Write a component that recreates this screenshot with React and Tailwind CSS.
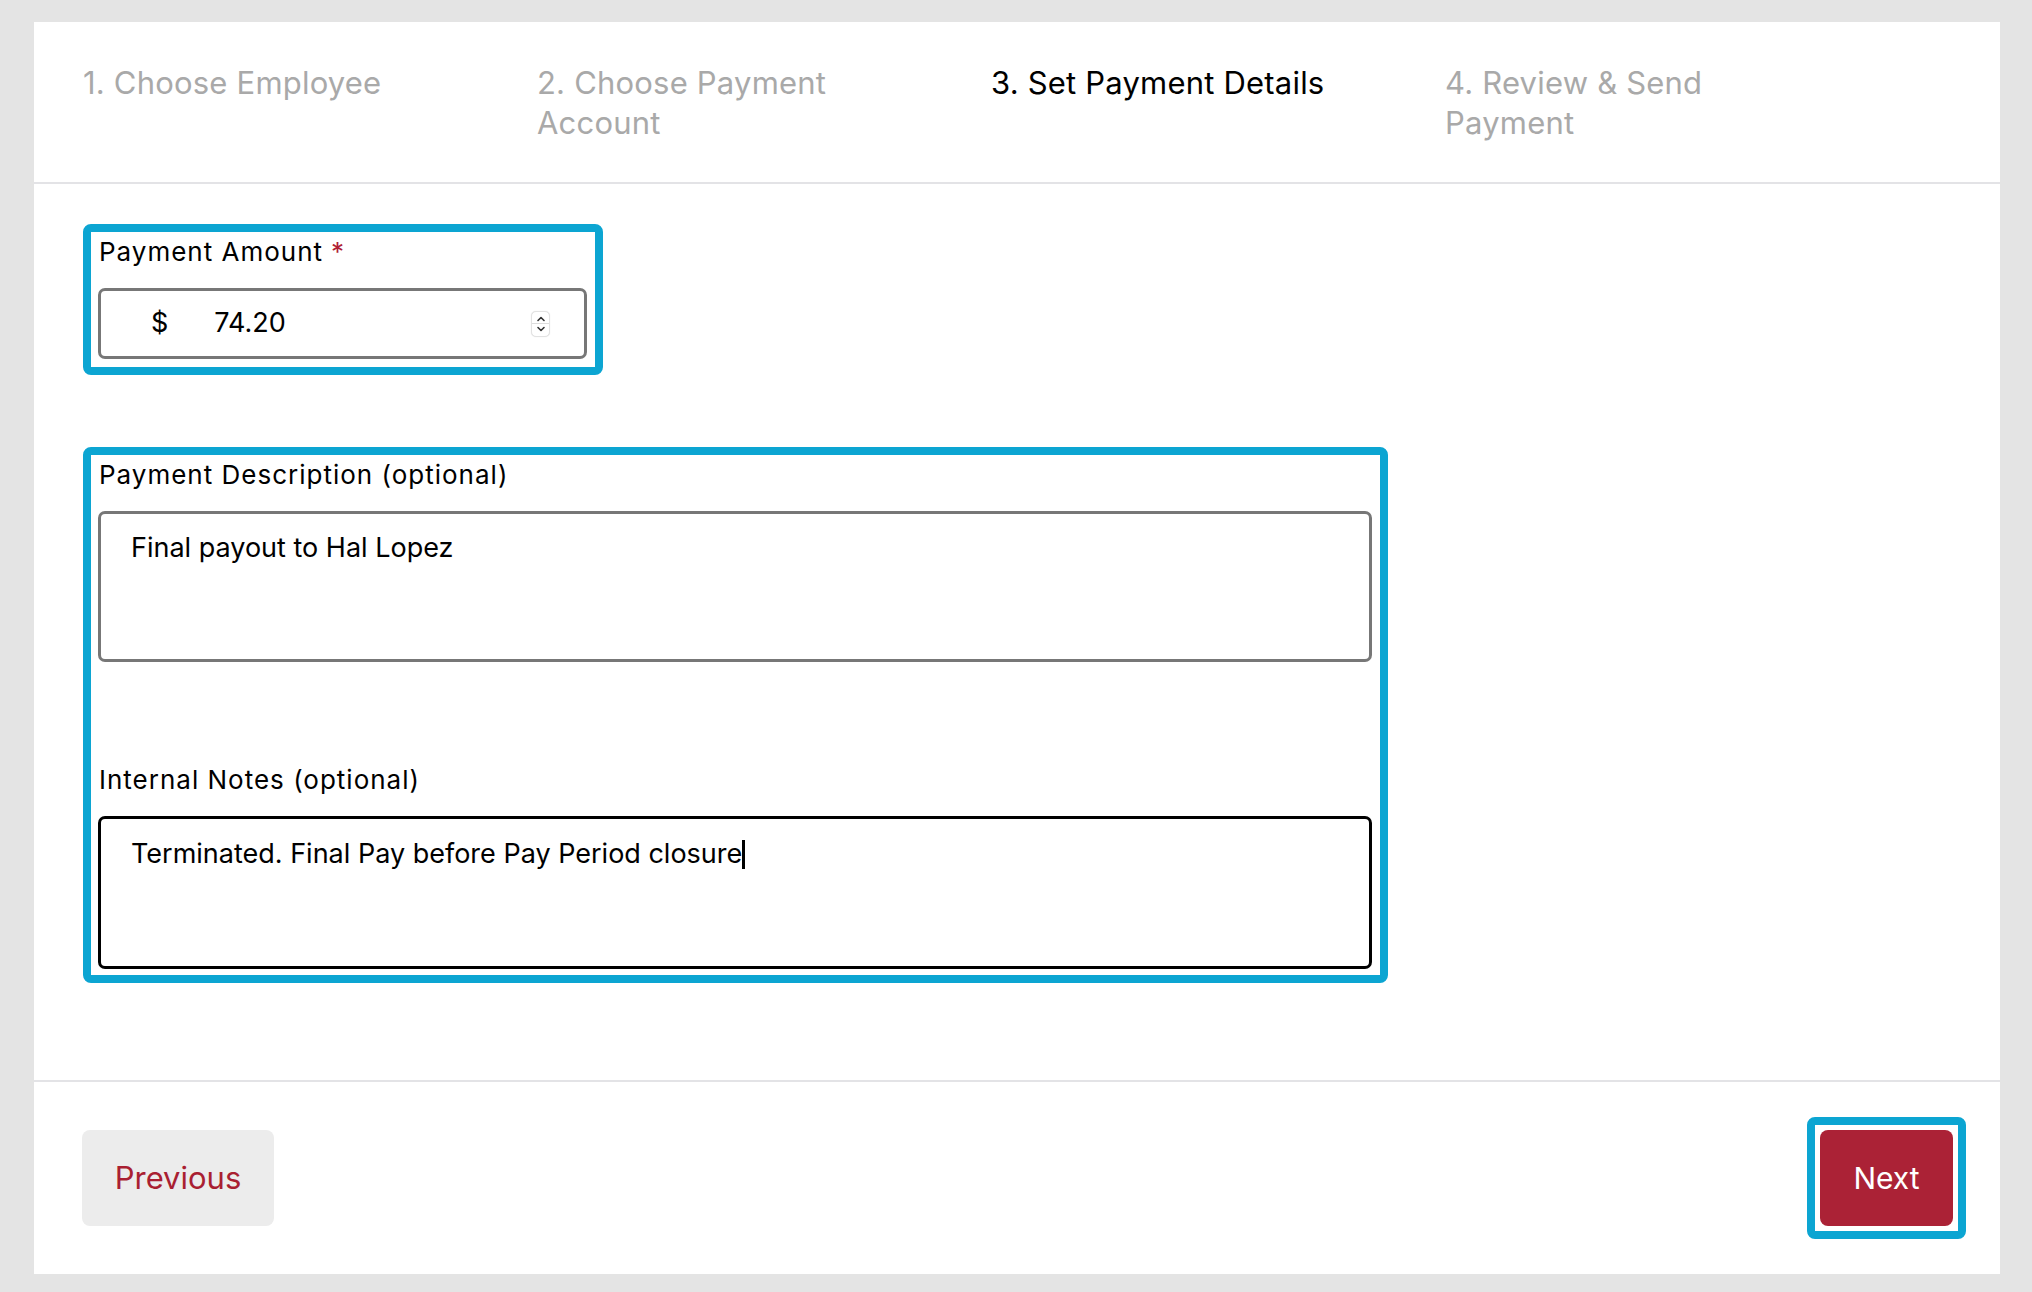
import React from "react";

const steps = [
  { label: "1. Choose Employee", active: false },
  { label: "2. Choose Payment Account", active: false },
  { label: "3. Set Payment Details", active: true },
  { label: "4. Review & Send Payment", active: false },
];

function Spinner() {
  return (
    <div className="flex flex-col items-center justify-between w-[19px] h-[26px] rounded-[5px] border border-[#e2e2e2] bg-white shadow-[0_0_1px_rgba(0,0,0,0.15)]">
      <svg width="10" height="8" viewBox="0 0 10 8" className="mt-[3px]">
        <path d="M2 5.5 L5 2.5 L8 5.5" fill="none" stroke="#333" strokeWidth="1.6" strokeLinecap="round" strokeLinejoin="round" />
      </svg>
      <div className="w-full h-px bg-[#dcdcdc]" />
      <svg width="10" height="8" viewBox="0 0 10 8" className="mb-[3px]">
        <path d="M2 2.5 L5 5.5 L8 2.5" fill="none" stroke="#333" strokeWidth="1.6" strokeLinecap="round" strokeLinejoin="round" />
      </svg>
    </div>
  );
}

function FieldLabel({ children, required }) {
  return (
    <div className="text-[26px] leading-[30px] tracking-[1px] text-black pl-[1px]">
      {children}
      {required && <span className="text-[#b01f35] ml-[8px]">*</span>}
    </div>
  );
}

export default function App() {
  return (
    <div className="min-h-screen bg-[#e4e4e4] pt-[22px] pl-[34px] font-['Inter',sans-serif]">
      <div className="w-[1966px] h-[1252px] bg-white flex flex-col">
        {/* steps */}
        <div className="h-[162px] border-b-2 border-[#e3e3e6] flex px-[49px] pt-[41px]">
          {steps.map((s) => (
            <div key={s.label} className="w-[454px] pr-[90px]">
              <div className={`text-[31px] leading-[40px] tracking-[0.2px] ${s.active ? "text-black" : "text-[#a9a9a9]"}`}>
                {s.label}
              </div>
            </div>
          ))}
        </div>

        {/* form */}
        <div className="flex-1 px-[49px] pt-[40px]">
          <div className="w-[520px] border-[8px] border-[#0ca5d2] rounded-[8px] pt-[5px] pb-[8px] pl-[7px] pr-[8px]">
            <FieldLabel required>Payment Amount</FieldLabel>
            <div className="mt-[21px] h-[71px] border-[3px] border-[#777] rounded-[7px] flex items-center pl-[50px] pr-[34px] text-[27px] text-black">
              <span>$</span>
              <span className="ml-[46px] flex-1">74.20</span>
              <Spinner />
            </div>
          </div>

          <div className="mt-[72px] w-[1305px] border-[8px] border-[#0ca5d2] rounded-[8px] pt-[5px] pb-[6px] pl-[7px] pr-[8px]">
            <FieldLabel>Payment Description (optional)</FieldLabel>
            <div className="mt-[21px] h-[151px] border-[3px] border-[#777] rounded-[7px] px-[30px] pt-[18px] text-[27px] leading-[32px] text-black">
              Final payout to Hal Lopez
            </div>

            <div className="mt-[103px]">
              <FieldLabel>Internal Notes (optional)</FieldLabel>
            </div>
            <div className="mt-[21px] h-[153px] border-[3px] border-black rounded-[7px] px-[30px] pt-[19px] text-[27px] leading-[32px] text-black">
              Terminated. Final Pay before Pay Period closure
              <span className="inline-block w-[3px] h-[29px] bg-black align-[-6px]" />
            </div>
          </div>
        </div>

        {/* footer */}
        <div className="h-[194px] border-t-2 border-[#e3e3e6] flex items-center justify-between pl-[48px] pr-[34px]">
          <button className="w-[192px] h-[96px] rounded-[8px] bg-[#ececec] text-[#a91f32] text-[31px]">
            Previous
          </button>
          <div className="border-[8px] border-[#0ca5d2] rounded-[8px] p-[5px]">
            <button className="w-[133px] h-[96px] rounded-[8px] bg-[#ab2236] text-white text-[30px]">
              Next
            </button>
          </div>
        </div>
      </div>
    </div>
  );
}
